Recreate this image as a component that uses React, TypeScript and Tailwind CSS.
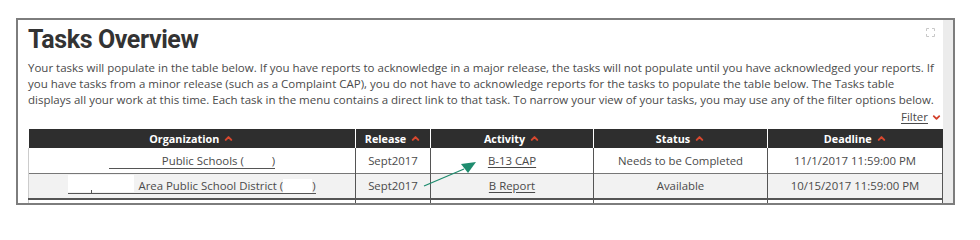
import { ChevronDown, ChevronUp } from "lucide-react";

const cols = [
  { label: "Organization", w: "w-[327px]" },
  { label: "Release", w: "w-[75px]" },
  { label: "Activity", w: "w-[163px]" },
  { label: "Status", w: "w-[174px]" },
  { label: "Deadline", w: "w-[175px]" },
];

const ExpandIcon = () => (
  <svg width="9" height="9" viewBox="0 0 9 9" fill="none" stroke="#c8c8c8" strokeWidth="1">
    <path d="M0.5 3V0.5H3M6 0.5H8.5V3M8.5 6V8.5H6M3 8.5H0.5V6" />
  </svg>
);

const cell = "border-l border-[#555] px-1 text-center align-middle";

export default function App() {
  return (
    <div className="relative h-[221px] w-[980px] overflow-hidden bg-white pt-[18px] pl-[16px] font-['Open_Sans',sans-serif] text-[#4a4a4a]">
      <div className="relative flex h-[187px] w-[939px] overflow-hidden border-2 border-[#7d7d7d]">
        <div className="flex-1 pl-[10px] pt-[5px]">
          <h1 className="h-[30px] font-['Roboto',sans-serif] text-[25px] font-bold leading-[30px] tracking-[-0.4px] text-[#333]">
            Tasks Overview
          </h1>
          <p className="mt-[5px] pr-[6px] text-[11.5px] leading-4">
            Your tasks will populate in the table below. If you have reports to acknowledge in a major release, the tasks will not populate until you have acknowledged your reports. If you have tasks from a minor release (such as a Complaint CAP), you do not have to acknowledge reports for the tasks to populate the table below. The Tasks table displays all your work at this time. Each task in the menu contains a direct link to that task. To narrow your view of your tasks, you may use any of the filter options below.
          </p>
          <div className="mt-px flex h-4 items-center justify-end gap-[3px] pr-px text-[11.5px] leading-4">
            <a className="underline underline-offset-2">Filter</a>
            <ChevronDown className="h-[11px] w-[11px] text-[#d3402b]" strokeWidth={4} />
          </div>
          <table className="mt-1 w-[914px] table-fixed border-collapse text-[11.4px]">
            <thead>
              <tr className="h-[19px] bg-[#2e2e2e] text-white">
                {cols.map((c, i) => (
                  <th key={c.label} className={`${c.w} ${i ? "border-l border-white" : ""} p-0 text-[10.8px] font-bold leading-[19px]`}>
                    <span className="inline-flex items-center gap-[4px]">
                      {c.label}
                      <ChevronUp className="h-[11px] w-[11px] text-[#d9482f]" strokeWidth={4.5} />
                    </span>
                  </th>
                ))}
              </tr>
            </thead>
            <tbody>
              <tr className="h-[25px] border-b border-[#777] bg-white">
                <td className={`${cell} border-l-[#ccc]`}>
                  <a className="inline-block border-b border-[#555] pl-[53px] leading-[14px]">
                    Public Schools (<span className="inline-block w-[28px]" />)
                  </a>
                </td>
                <td className={cell}>Sept2017</td>
                <td className={cell}>
                  <a className="underline underline-offset-2">B-13 CAP</a>
                </td>
                <td className={cell}>Needs to be Completed</td>
                <td className={`${cell} border-r`}>11/1/2017 11:59:00 PM</td>
              </tr>
              <tr className="h-[26px] border-b-2 border-[#555] bg-[#f2f2f2]">
                <td className={`${cell} border-l-[#ccc]`}>
                  <a className="relative inline-block border-b border-[#555] pl-[70px] leading-[14px]">
                    <span className="absolute bottom-[1px] left-0 h-[17px] w-[66px] bg-white" />
                    <span className="absolute bottom-0 left-[23px] h-[3px] w-px bg-[#555]" />
                    Area Public School District (<span className="inline-block h-[14px] w-[29px] bg-white align-bottom" />)
                  </a>
                </td>
                <td className={cell}>Sept2017</td>
                <td className={cell}>
                  <a className="underline underline-offset-2">B Report</a>
                </td>
                <td className={cell}>Available</td>
                <td className={`${cell} border-r`}>10/15/2017 11:59:00 PM</td>
              </tr>
              <tr className="h-[26px] bg-white">
                <td className={`${cell} border-l-[#ccc]`} />
                <td className={cell} />
                <td className={cell} />
                <td className={cell} />
                <td className={`${cell} border-r`} />
              </tr>
            </tbody>
          </table>
        </div>
        <div className="w-[12px] bg-[#ececec]" />
        <div className="absolute right-[18px] top-[8px]">
          <ExpandIcon />
        </div>
      </div>
      <svg className="absolute left-0 top-0" width="980" height="221" viewBox="0 0 980 221">
        <line x1="424" y1="186" x2="464" y2="169" stroke="#1e8c6e" strokeWidth="1.3" />
        <polygon points="461,164 476,162 468,173" fill="#1e8c6e" />
      </svg>
    </div>
  );
}
